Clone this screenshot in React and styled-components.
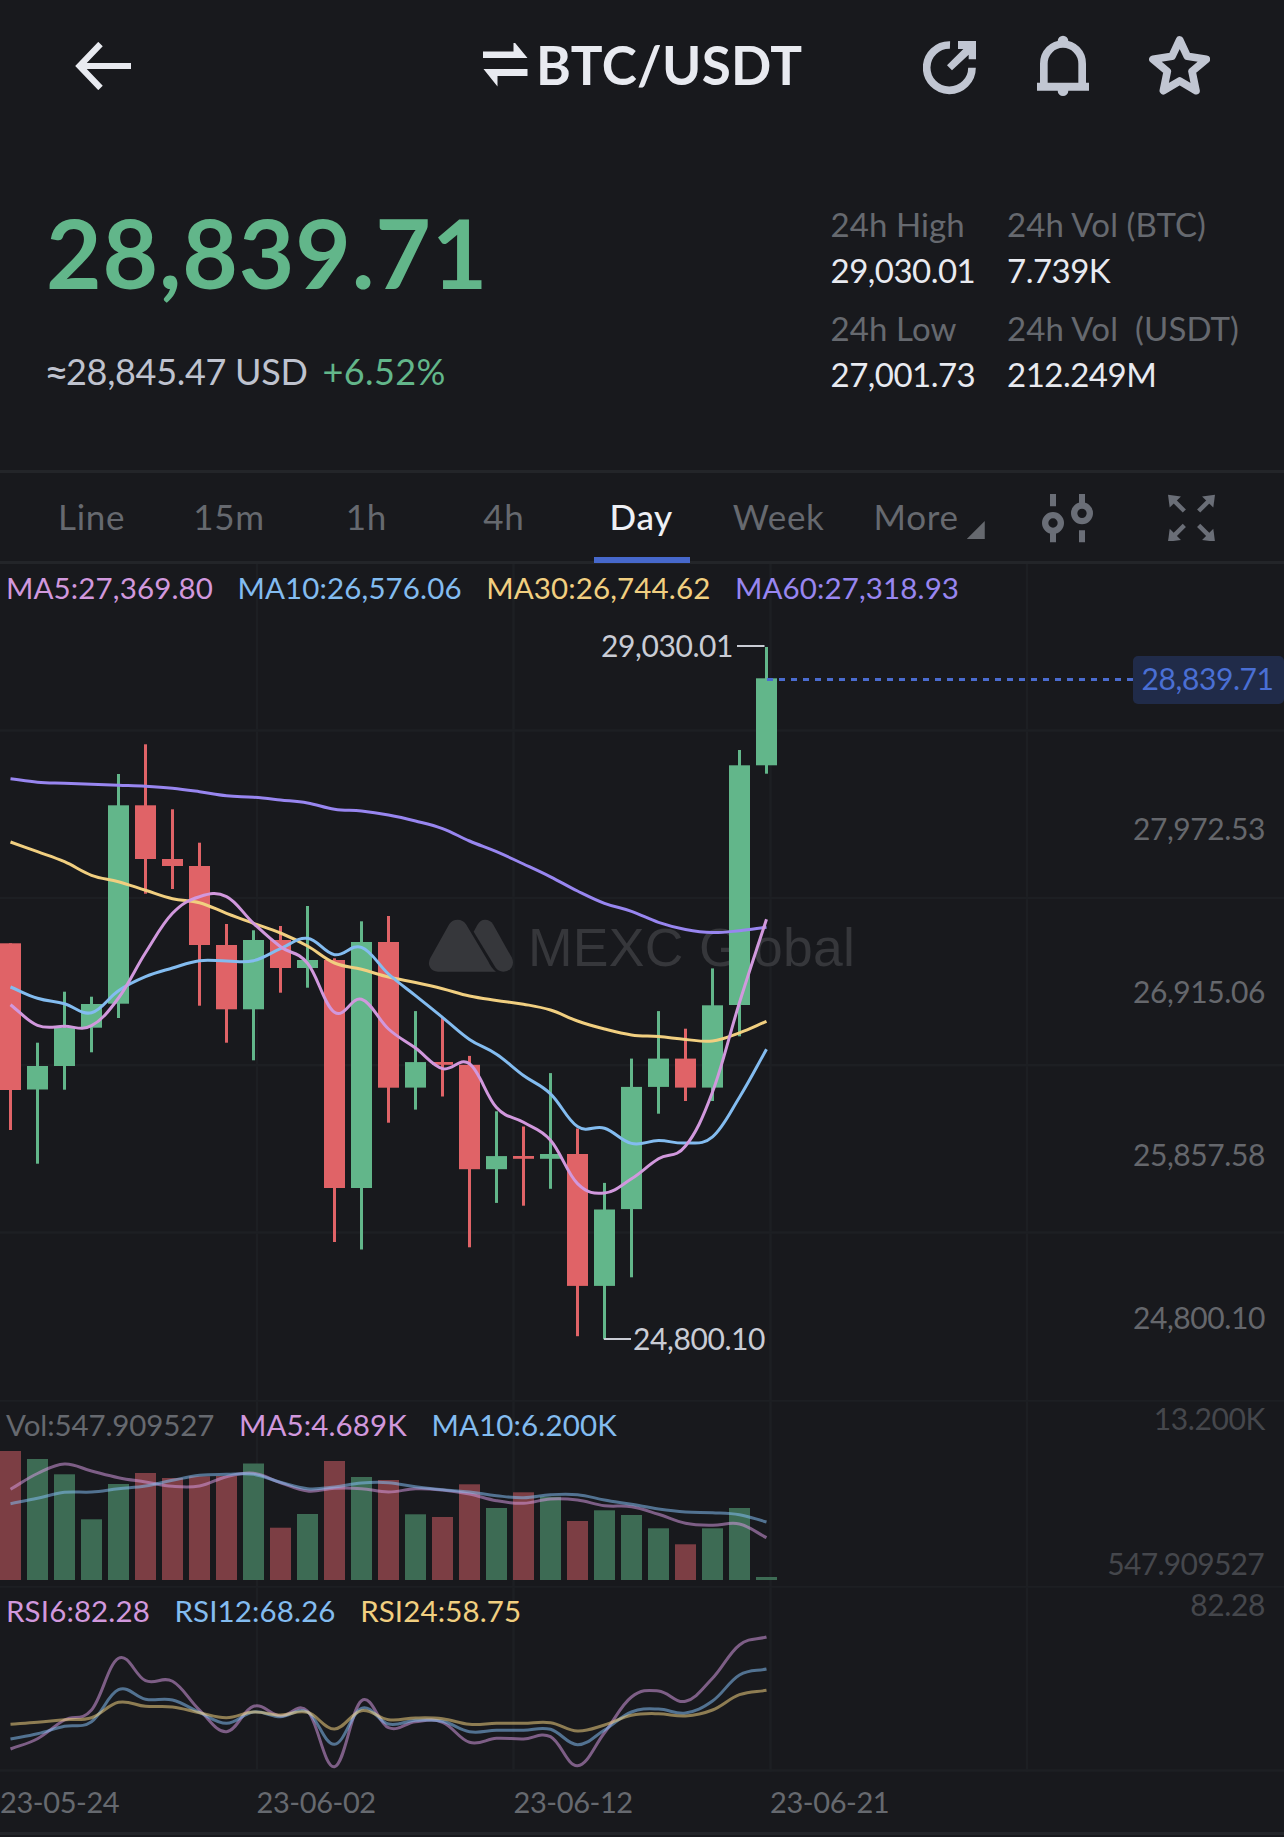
import React from 'react';
import styled, { createGlobalStyle } from 'styled-components';

const GlobalStyle = createGlobalStyle`
  * {
    box-sizing: border-box;
  }

  body {
    margin: 0;
    background: #18191d;
    font-family: Lato, 'Liberation Sans', sans-serif;
  }
`;

const colors = {
  up: '#62b68a',
  down: '#e06367',
  upDim: '#3d6b54',
  downDim: '#7c3e44',
  pink: '#d198dd',
  blue: '#83bcf0',
  yellow: '#f1cf80',
  purple: '#9886f0',
  muted: '#66696f',
  dim: '#45474c',
  grid: '#1d1f23',
  line: '#232529',
};

const Screen = styled.div`
  width: 1284px;
  height: 1837px;
  overflow: hidden;
  background: #18191d;
  color: #e8eaf0;
`;

/* header */

const Header = styled.header`
  display: flex;
  align-items: center;
  height: 131px;
  padding: 0 74px 0 75px;
`;

const Pair = styled.div`
  display: flex;
  align-items: center;
  margin-left: 352px;
`;

const PairName = styled.h1`
  margin: 0 0 0 8px;
  width: 276px;
  font-size: 53px;
  font-weight: 700;
  line-height: 58px;
  letter-spacing: 0.3px;
  padding-bottom: 2px;
`;

const HeaderActions = styled.div`
  display: flex;
  flex: 1;
  justify-content: space-between;
  align-items: center;
  margin-left: 111px;
  color: #c1c6d2;
`;

/* price summary */

const Summary = styled.section`
  display: flex;
  justify-content: space-between;
  height: 339px;
  padding: 70px 36px 0 46px;
`;

const Price = styled.div`
  margin-top: 3px;
  color: ${colors.up};
  font-size: 96px;
  font-weight: 700;
  line-height: 96px;
  letter-spacing: 0.8px;
`;

const SubPrice = styled.div`
  display: flex;
  margin: 49px 0 0 -2px;
  color: #bfc3cf;
  font-size: 36px;
  line-height: 44px;
  letter-spacing: -0.3px;
`;

const Approx = styled.span`
  width: 22px;
  font-size: 43px;
`;

const Change = styled.span`
  margin-left: 15px;
  color: ${colors.up};
  letter-spacing: 0.4px;
`;

const Stats = styled.dl`
  display: grid;
  grid-template-columns: 176.5px 241px;
  row-gap: 12px;
  align-content: start;
  margin: 0;
  font-size: 33px;
  line-height: 46px;
  white-space: pre;
`;

const StatLabel = styled.dt`
  color: ${colors.muted};
  letter-spacing: 0.1px;
`;

const StatValue = styled.dd`
  margin: 0;
  letter-spacing: -0.5px;
`;

/* timeframes */

const Timeframes = styled.nav`
  display: flex;
  height: 94px;
  padding-left: 23px;
  border: solid ${colors.line};
  border-width: 3px 0;
`;

const Tab = styled.div`
  position: relative;
  width: 137.4px;
  height: 88px;
  color: ${({ $active }) => ($active ? '#eef0f5' : colors.muted)};
  font-size: 35px;
  font-weight: ${({ $active }) => ($active ? 500 : 400)};
  line-height: 86px;
  letter-spacing: 0.7px;
  text-align: center;
`;

const Underline = styled.span`
  position: absolute;
  left: 21px;
  bottom: -2px;
  width: 96px;
  height: 6px;
  background: #4668cc;
`;

const Corner = styled.span`
  position: absolute;
  right: 0;
  top: 48px;
  width: 18px;
  height: 18px;
  background: ${colors.muted};
  clip-path: polygon(100% 0, 100% 100%, 0 100%);
`;

const Tools = styled.div`
  display: flex;
  align-items: flex-start;
  gap: 75px;
  margin-left: 57px;
  padding-top: 21px;
  color: #6a6e77;
`;

/* chart panels */

const Panel = styled.section`
  position: relative;
  height: ${({ $height }) => $height}px;
`;

const Canvas = styled.svg`
  position: absolute;
  inset: 0;
  display: block;
  width: 1284px;
  height: 100%;
  font-size: 30px;
  letter-spacing: -0.4px;
`;

const Legend = styled.div`
  position: relative;
  display: flex;
  gap: 24.5px;
  padding: 1px 0 0 6px;
  font-size: 29.5px;
  line-height: ${({ $line }) => $line}px;
  letter-spacing: 0.13px;
`;

const LegendItem = styled.span`
  color: ${({ $color }) => $color};
  letter-spacing: ${({ $tight }) => ($tight ? '-0.1px' : 'inherit')};
`;

const DateAxis = styled.footer`
  display: grid;
  grid-template-columns: 256.5px 257px 256.5px 1fr;
  height: 63px;
  border-bottom: 3px solid ${colors.line};
  color: ${colors.muted};
  font-size: 29px;
  line-height: 60px;
  letter-spacing: -0.4px;
`;

const STEP = 27;
const centerX = (i) => 10.5 + i * STEP;

// [up, high, body top, body bottom, low]
const candles = [
  [0, 943.3, 943.3, 1090, 1130],
  [1, 1042.7, 1066, 1089.5, 1163.7],
  [1, 991.7, 1028, 1066, 1089.7],
  [1, 996.7, 1004, 1027.7, 1052.3],
  [1, 774, 805.3, 1003.7, 1018],
  [0, 744.3, 805.3, 859, 893.7],
  [0, 809.3, 859, 866, 889],
  [0, 842.7, 866, 945, 1005.7],
  [0, 924, 945, 1009.3, 1042.7],
  [1, 930.3, 940, 1009.3, 1060.3],
  [0, 926, 940, 968, 992.7],
  [1, 906, 960, 968, 987.7],
  [0, 958.3, 960, 1188, 1242],
  [1, 921.3, 942, 1188, 1249.5],
  [0, 916, 942, 1087.7, 1122.7],
  [1, 1011.1, 1062.1, 1087.6, 1109.6],
  [0, 1018, 1062, 1064.8, 1096.5],
  [0, 1055.9, 1064.8, 1169.2, 1247.3],
  [1, 1111.3, 1156.1, 1169.2, 1202.9],
  [0, 1126.5, 1156, 1158.8, 1205.7],
  [1, 1073.1, 1154, 1158.8, 1188.8],
  [0, 1128.5, 1154, 1285.9, 1336.2],
  [1, 1182.9, 1209.5, 1285.9, 1339.3],
  [1, 1058.6, 1086.9, 1209.1, 1277.3],
  [1, 1011.1, 1058.6, 1086.9, 1113.7],
  [0, 1028.7, 1058.6, 1087.6, 1101],
  [1, 968.4, 1005.3, 1087.6, 1101],
  [1, 750, 765.3, 1005, 1036.3],
  [1, 647, 678.3, 765.3, 773.7],
];

const ma5 = [1004.7, 1025.3, 1026.3, 1025.7, 998, 952.7, 913.3, 896.7, 896.7, 923.3, 946.7, 963.3, 1012.3, 999.3, 1029, 1048, 1068.6, 1063.8, 1107.5, 1122.3, 1140.2, 1183.6, 1193, 1178.8, 1158.8, 1146, 1092, 1002.5, 919.2];
const ma10 = [987, 998.3, 1003.7, 1012.7, 990.7, 976.7, 968, 960.7, 961, 960.7, 948.7, 938.3, 954.7, 947.3, 974, 995.6, 1017.3, 1039.4, 1054.2, 1075.5, 1093.8, 1126.5, 1128.2, 1143.4, 1140.6, 1143, 1136.8, 1097.2, 1049.3];
const ma30 = [842, 851.7, 861.7, 875.3, 881.7, 890.3, 898.7, 902.7, 913.3, 923.3, 933, 946, 963, 969.3, 977, 982.5, 988.7, 996, 1000.4, 1004.2, 1010, 1021, 1029, 1034.9, 1036.6, 1039.4, 1041, 1032.8, 1021.4];
const ma60 = [778.7, 782.3, 783.3, 784.3, 785.3, 786.3, 788.3, 791.7, 795.7, 797.3, 800, 803, 809.3, 811, 815, 821, 828.6, 841, 851.7, 864, 876.8, 891, 903.3, 911.3, 922.3, 929.5, 932.6, 930.7, 927.2];

const volumeTops = [1451, 1459, 1474.3, 1519.3, 1484, 1473, 1478, 1476.3, 1476, 1463.5, 1527.7, 1514, 1461, 1477, 1480, 1514.3, 1517, 1484.3, 1508, 1492.3, 1496.7, 1521, 1510.3, 1515, 1528.3, 1544.3, 1528.3, 1508, 1577];
const volMa5 = [1489.3, 1473.5, 1464, 1471, 1477.7, 1482, 1486.3, 1486, 1476.7, 1473.3, 1482.7, 1491, 1488.3, 1488.7, 1492, 1488.7, 1490, 1494, 1500.7, 1503.3, 1499, 1500, 1505.7, 1506.7, 1514.3, 1523.3, 1525.3, 1524, 1537.7];
const volMa10 = [1503.7, 1498.3, 1492.3, 1492, 1488.7, 1486, 1480.3, 1475.3, 1474.3, 1474.3, 1482.3, 1488.7, 1487, 1483, 1482.7, 1486.7, 1489.7, 1492, 1495.7, 1497.7, 1494.7, 1494.7, 1500, 1504.3, 1509, 1512, 1512.7, 1514.7, 1522];

const rsi6 = [1749, 1738.7, 1720, 1710, 1658.3, 1680.7, 1681.3, 1710, 1731.7, 1706.3, 1716, 1711, 1766.7, 1700.7, 1727.7, 1721.7, 1722.3, 1742.3, 1738.3, 1739, 1736.7, 1765.7, 1732.7, 1697, 1691, 1701.3, 1678.3, 1645, 1637];
const rsi12 = [1739, 1733.7, 1726.3, 1721.7, 1689.7, 1699.3, 1700, 1712.3, 1723.3, 1712, 1716.7, 1712, 1744.3, 1708.3, 1724, 1720.3, 1721.3, 1731.7, 1730.3, 1730.3, 1729.3, 1744.7, 1730, 1712, 1709, 1713, 1701, 1675, 1669];
const rsi24 = [1724.3, 1722.3, 1719.7, 1717.7, 1702.3, 1706.3, 1707, 1712.7, 1717.7, 1712, 1715, 1712.3, 1729, 1710.7, 1719.7, 1718, 1718.7, 1724.3, 1723.3, 1723.3, 1722.7, 1731, 1725, 1715.3, 1713.7, 1716, 1710, 1694.7, 1690.3];

const smoothPath = (values) => {
  const at = (i) => values[Math.max(0, Math.min(values.length - 1, i))];
  const last = values.length - 2;
  const k = 0.19;
  let d = `M${centerX(0)} ${values[0]}`;
  for (let i = 0; i <= last; i += 1) {
    const step = at(i + 1) - at(i);
    // the ends keep the slope of their own segment
    const c1 = at(i) + (i === 0 ? step * 0.38 : (at(i + 1) - at(i - 1)) * k);
    const c2 = at(i + 1) - (i === last ? step * 0.38 : (at(i + 2) - at(i)) * k);
    d += ` C${centerX(i) + STEP * 0.38} ${c1} ${centerX(i + 1) - STEP * 0.38} ${c2} ${centerX(i + 1)} ${at(i + 1)}`;
  }
  return d;
};

const Curve = ({ values, color, opacity = 1 }) => (
  <path d={smoothPath(values)} fill="none" stroke={color} strokeWidth="3" opacity={opacity} />
);

const Grid = ({ top, bottom, rows }) => (
  <g stroke={colors.grid} strokeWidth="2.5">
    {[257, 513.5, 770.5, 1027].map((x) => (
      <line key={x} x1={x} x2={x} y1={top} y2={bottom} />
    ))}
    {rows.map((y) => (
      <line key={y} x1="0" x2="1284" y1={y} y2={y} />
    ))}
  </g>
);

const BackIcon = () => (
  <svg width="56" height="48" viewBox="0 0 56 48" fill="none" stroke="#e8eaf0" strokeWidth="6.2">
    <path d="M56 24H5M25.500 2L4.500 24L25.500 46" />
  </svg>
);

const SwapIcon = () => (
  <svg width="45" height="46" viewBox="0 2 45 46" fill="#e8eaf0">
    <path d="M0 10.500H30.500V0L44.500 17H0ZM0.500 28H44.500V35H14.500V45.500Z" />
  </svg>
);

const ShareIcon = () => (
  <svg width="53" height="60" viewBox="36 48 159 180">
    <path d="M117 75A68 68 0 1 0 183 143" fill="none" stroke="currentColor" strokeWidth="23" />
    <path d="M141 63H195V118H173V104L123 151L108 136L157 87H141Z" fill="currentColor" />
  </svg>
);

const BellIcon = () => (
  <svg width="52" height="61" viewBox="381 46 156 183" fill="currentColor">
    <path d="M401.500 192V132A57.500 59 0 0 1 516.500 132V192" fill="none" stroke="currentColor" strokeWidth="23" />
    <path d="M381 189H537V213H475A16 16 0 0 1 443 213H381Z" />
    <circle cx="459" cy="64" r="16" />
  </svg>
);

const StarIcon = () => (
  <svg width="61" height="60" viewBox="717 47 183 180">
    <path
      d="M809 59L832 108L889 117L846 153L858 211L809 182L760 211L772 153L729 117L786 108Z"
      fill="none"
      stroke="currentColor"
      strokeWidth="23"
      strokeLinejoin="round"
    />
  </svg>
);

const IndicatorIcon = () => (
  <svg width="51" height="49" viewBox="36 41 153 147" fill="none" stroke="currentColor">
    <g strokeWidth="18">
      <path d="M69 41V78M69 155V186M156 41V72M156 150V186" />
      <circle cx="69" cy="128" r="23.500" strokeWidth="19" />
      <circle cx="156" cy="99" r="23.500" strokeWidth="19" />
    </g>
  </svg>
);

const ExpandIcon = () => (
  <svg width="47" height="47" viewBox="-69 -71 138 138">
    {['1 1', '-1 1', '1 -1', '-1 -1'].map((s) => (
      <g key={s} transform={`scale(${s})`}>
        <path d="M-69 -69L-31 -64L-64 -31Z" fill="currentColor" />
        <path d="M-55 -55L-21 -21" stroke="currentColor" strokeWidth="13" />
      </g>
    ))}
  </svg>
);

const Watermark = () => (
  <g fill="#36373b">
    <g transform="translate(420 900) scale(0.3333)">
      <path d="M88 72Q97 59 113 59Q129 59 138 73L204 183Q214 205 228 215H54Q38 215 30 202Q23 189 31 174Z" />
      <path d="M161 95L172 75Q181 59 195 59Q211 59 219 73L275 172Q283 188 275 202Q267 215 250 215Q235 215 226 202Z" />
    </g>
    <text x="528" y="965.5" fontFamily="Liberation Sans" fontSize="53.5" textLength="327" letterSpacing="0">
      MEXC Global
    </text>
  </g>
);

const PriceChart = () => (
  <Canvas viewBox="0 564 1284 836">
    <Grid top={564} bottom={1400} rows={[730.5, 898, 1065.3, 1232.5]} />
    <Watermark />
    {candles.map(([up, high, top, bottom, low], i) => (
      <g key={i} fill={up ? colors.up : colors.down}>
        <rect x={centerX(i) - 1.5} y={high} width="3" height={low - high} />
        <rect x={centerX(i) - 10.5} y={top} width="21" height={bottom - top} />
      </g>
    ))}
    <Curve values={ma60} color={colors.purple} />
    <Curve values={ma30} color={colors.yellow} />
    <Curve values={ma10} color={colors.blue} />
    <Curve values={ma5} color={colors.pink} />

    <g fill="#c9ccd5">
      <text x="601" y="657">29,030.01</text>
      <rect x="737" y="645" width="27.500" height="2" />
      <rect x="604" y="1338" width="27" height="2" />
      <text x="633" y="1350">24,800.10</text>
    </g>

    <g fill="#65676c" textAnchor="end">
      <text x="1265" y="840">27,972.53</text>
      <text x="1265" y="1003">26,915.06</text>
      <text x="1265" y="1166">25,857.58</text>
      <text x="1265" y="1329">24,800.10</text>
    </g>

    <line x1="767" x2="1133" y1="679.5" y2="679.5" stroke="#4a6cd0" strokeWidth="3" strokeDasharray="6 6" />
    <rect x="1133" y="656" width="151" height="48" rx="5" fill="#202b49" />
    <text x="1141.5" y="690" fill="#4a6fd4">28,839.71</text>
  </Canvas>
);

const VolumeChart = () => (
  <Canvas viewBox="0 1400 1284 186">
    <Grid top={1400} bottom={1586} rows={[1400.5]} />
    {volumeTops.map((y, i) => (
      <rect
        key={i}
        x={centerX(i) - 10.5}
        y={y}
        width="21"
        height={1580 - y}
        fill={candles[i][0] ? colors.upDim : colors.downDim}
      />
    ))}
    <Curve values={volMa5} color={colors.pink} opacity={0.55} />
    <Curve values={volMa10} color={colors.blue} opacity={0.55} />
    <g fill={colors.dim} textAnchor="end">
      <text x="1265" y="1430">13.200K</text>
      <text x="1264" y="1575" letterSpacing="-0.7">547.909527</text>
    </g>
  </Canvas>
);

const RsiChart = () => (
  <Canvas viewBox="0 1586 1284 186">
    <Grid top={1586} bottom={1772} rows={[1586.5, 1770.5]} />
    <Curve values={rsi6} color={colors.pink} opacity={0.55} />
    <Curve values={rsi12} color={colors.blue} opacity={0.55} />
    <Curve values={rsi24} color={colors.yellow} opacity={0.55} />
    <text x="1265" y="1616" fill={colors.dim} textAnchor="end">82.28</text>
  </Canvas>
);

const App = () => {
  return (
    <>
      <GlobalStyle />
      <Screen>
        <Header>
          <BackIcon />
          <Pair>
            <SwapIcon />
            <PairName>BTC/USDT</PairName>
          </Pair>
          <HeaderActions>
            <ShareIcon />
            <BellIcon />
            <StarIcon />
          </HeaderActions>
        </Header>

        <Summary>
          <div>
            <Price>28,839.71</Price>
            <SubPrice>
              <Approx>≈</Approx>
              <span>28,845.47 USD</span>
              <Change>+6.52%</Change>
            </SubPrice>
          </div>
          <Stats>
            <div>
              <StatLabel>24h High</StatLabel>
              <StatValue>29,030.01</StatValue>
            </div>
            <div>
              <StatLabel>24h Vol (BTC)</StatLabel>
              <StatValue>7.739K</StatValue>
            </div>
            <div>
              <StatLabel>24h Low</StatLabel>
              <StatValue>27,001.73</StatValue>
            </div>
            <div>
              <StatLabel>{'24h Vol  (USDT)'}</StatLabel>
              <StatValue>212.249M</StatValue>
            </div>
          </Stats>
        </Summary>

        <Timeframes>
          {['Line', '15m', '1h', '4h', 'Day', 'Week', 'More'].map((name) => (
            <Tab key={name} $active={name === 'Day'}>
              {name}
              {name === 'Day' && <Underline />}
              {name === 'More' && <Corner />}
            </Tab>
          ))}
          <Tools>
            <IndicatorIcon />
            <ExpandIcon />
          </Tools>
        </Timeframes>

        <Panel $height={836}>
          <PriceChart />
          <Legend $line={46}>
            <LegendItem $color={colors.pink}>MA5:27,369.80</LegendItem>
            <LegendItem $color={colors.blue}>MA10:26,576.06</LegendItem>
            <LegendItem $color={colors.yellow}>MA30:26,744.62</LegendItem>
            <LegendItem $color={colors.purple}>MA60:27,318.93</LegendItem>
          </Legend>
        </Panel>

        <Panel $height={186}>
          <VolumeChart />
          <Legend $line={48}>
            <LegendItem $color={colors.muted} $tight>Vol:547.909527</LegendItem>
            <LegendItem $color={colors.pink}>MA5:4.689K</LegendItem>
            <LegendItem $color={colors.blue}>MA10:6.200K</LegendItem>
          </Legend>
        </Panel>

        <Panel $height={186}>
          <RsiChart />
          <Legend $line={48.5}>
            <LegendItem $color={colors.pink}>RSI6:82.28</LegendItem>
            <LegendItem $color={colors.blue}>RSI12:68.26</LegendItem>
            <LegendItem $color={colors.yellow}>RSI24:58.75</LegendItem>
          </Legend>
        </Panel>

        <DateAxis>
          <span>23-05-24</span>
          <span>23-06-02</span>
          <span>23-06-12</span>
          <span>23-06-21</span>
        </DateAxis>
      </Screen>
    </>
  );
};

export default App;
